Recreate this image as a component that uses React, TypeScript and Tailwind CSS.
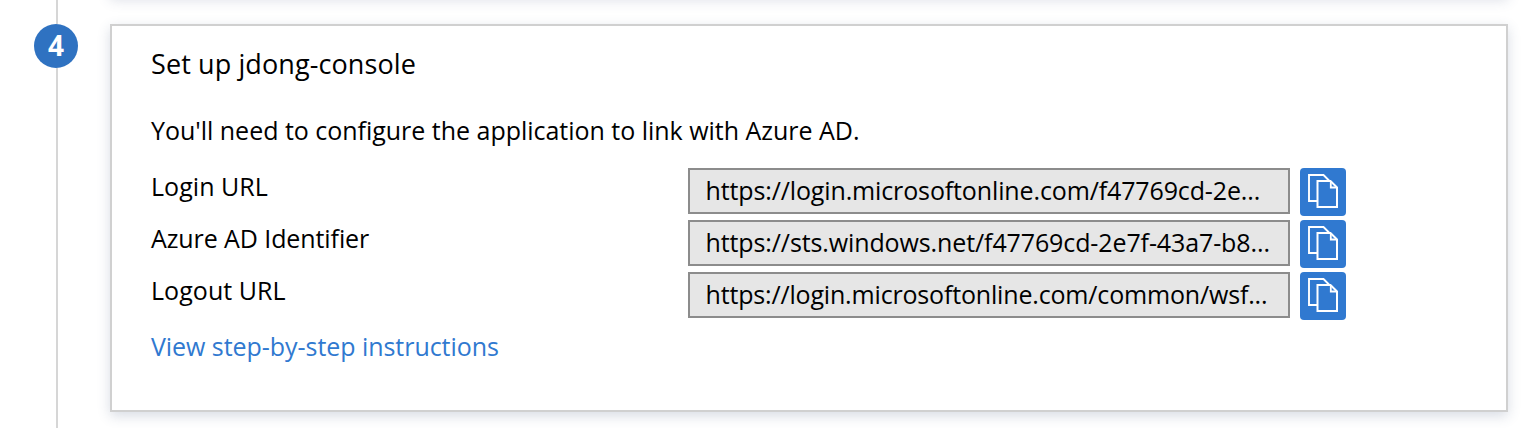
interface UrlField {
  label: string;
  value: string;
  tracking: string;
  labelTracking: string;
}

const fields: UrlField[] = [
  {
    label: "Login URL",
    value: "https://login.microsoftonline.com/f47769cd-2e...",
    tracking: "tracking-[-0.13px]",
    labelTracking: "tracking-[0.05px]",
  },
  {
    label: "Azure AD Identifier",
    value: "https://sts.windows.net/f47769cd-2e7f-43a7-b8...",
    tracking: "tracking-[-0.11px]",
    labelTracking: "tracking-[-0.09px]",
  },
  {
    label: "Logout URL",
    value: "https://login.microsoftonline.com/common/wsf...",
    tracking: "tracking-[-0.17px]",
    labelTracking: "tracking-[0.05px]",
  },
];

function CopyIcon() {
  return (
    <svg width="46" height="48" viewBox="0 0 46 48" fill="none" stroke="#fff" strokeWidth="2">
      <path d="M17 33H9V7h14.5l5.5 5.5" strokeWidth="1.9" />
      <path d="M17.5 13H30.5l6.5 6.5V39H17.5z" fill="#3079d0" />
      <path d="M30.8 13v6.5H37" strokeWidth="1.8" />
    </svg>
  );
}

function UrlRow({ field }: { field: UrlField }) {
  return (
    <div className="flex h-12 items-start">
      <div className={`w-[537px] leading-9 ${field.labelTracking}`}>{field.label}</div>
      <div
        className={`h-[46px] w-[602px] overflow-hidden border-2 border-[#8c8c8c] bg-[#e6e6e6] pl-[15.5px] leading-[41px] whitespace-nowrap ${field.tracking}`}
      >
        {field.value}
      </div>
      <button
        type="button"
        aria-label={`Copy ${field.label}`}
        className="ml-2.5 h-12 w-[46px] rounded-[4px] bg-[#3079d0]"
      >
        <CopyIcon />
      </button>
    </div>
  );
}

export default function App() {
  return (
    <main className="flex h-[428px] w-[1522px] overflow-hidden bg-white font-['Open_Sans','Noto_Sans',sans-serif] text-[25px] text-black">
      <div className="flex w-[110px] shrink-0 flex-col pl-[34px]">
        <div className="ml-[22px] h-6 w-0.5 bg-[#d6d6d6]" />
        <div className="flex size-11 items-center justify-center rounded-full bg-[#2f72c1] pb-0.5 text-[28px] leading-none font-bold text-white">
          4
        </div>
        <div className="ml-[22px] w-0.5 grow bg-[#d6d6d6]" />
      </div>
      <div className="flex w-[1398px] shrink-0 flex-col">
        <div className="-mt-11 h-10 shrink-0 shadow-[0_4px_12px_rgba(60,80,120,0.18)]" />
        <section className="mt-7 h-[388px] shrink-0 border-2 border-[#d0d0d0] bg-white pt-5 pl-[39px] shadow-[0_4px_12px_rgba(60,80,120,0.2)]">
          <h2 className="text-[27px] leading-9 tracking-[0.1px]">Set up jdong-console</h2>
          <p className="mt-[30px] leading-9 tracking-[-0.02px]">
            You'll need to configure the application to link with Azure AD.
          </p>
          <div className="mt-5 flex flex-col gap-1">
            {fields.map((field) => (
              <UrlRow key={field.label} field={field} />
            ))}
          </div>
          <a href="#" className="mt-2 block leading-9 tracking-[-0.05px] text-[#3079d0]">
            View step-by-step instructions
          </a>
        </section>
      </div>
    </main>
  );
}
